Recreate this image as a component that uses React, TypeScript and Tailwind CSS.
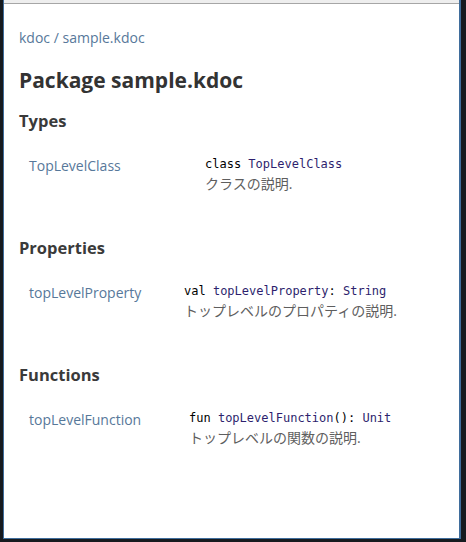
import React from "react";

const sans = { fontFamily: '"Open Sans", "Noto Sans CJK JP", sans-serif' };
const mono = { fontFamily: '"DejaVu Sans Mono", "Liberation Mono", monospace' };

function Section({
  title,
  link,
  col,
  code,
  desc,
}: {
  title: string;
  link: string;
  col: string;
  code: React.ReactNode;
  desc: string;
}) {
  return (
    <div className="pb-[41px]">
      <h2 className="text-[16.5px] leading-[24px] font-bold text-[#3a3a3a]">{title}</h2>
      <div className="mt-[21px] flex">
        <div className={`${col} pl-[10px] -mt-[1px]`}>
          <a className="text-[14px] leading-[20px] text-[#57789a]">{link}</a>
        </div>
        <div className="pt-[1px]">
          <div className="text-[12px] leading-[18px] text-black whitespace-pre" style={mono}>
            {code}
          </div>
          <p className="text-[14px] leading-[22px] text-[#5e5e5e]">{desc}</p>
        </div>
      </div>
    </div>
  );
}

export default function App() {
  const id = "text-[#2e1f6e]";
  return (
    <div className="w-[466px] h-[542px] bg-[#161a1f] pl-[3px] pr-[5px] pb-[3px]" style={sans}>
      <div className="h-full border-l border-r-2 border-b border-[#3f6d9c] bg-white flex flex-col">
        <div className="h-[3px] bg-[#eeeeee]" />
        <div className="h-px bg-[#a6a6a6]" />
        <div className="pl-[15px] pt-[24px]">
          <div className="text-[14px] leading-[20px] text-[#57789a]">
            <span>kdoc</span> / <span>sample.kdoc</span>
          </div>
          <h1 className="mt-[18px] text-[21px] leading-[28px] font-bold text-[#333333]">
            Package sample.kdoc
          </h1>
          <div className="mt-[15px]">
            <Section
              title="Types"
              link="TopLevelClass"
              col="w-[186px]"
              code={
                <>
                  class <span className={id}>TopLevelClass</span>
                </>
              }
              desc="クラスの説明."
            />
            <Section
              title="Properties"
              link="topLevelProperty"
              col="w-[165px]"
              code={
                <>
                  val <span className={id}>topLevelProperty</span>: <span className={id}>String</span>
                </>
              }
              desc="トップレベルのプロパティの説明."
            />
            <Section
              title="Functions"
              link="topLevelFunction"
              col="w-[170px]"
              code={
                <>
                  fun <span className={id}>topLevelFunction</span>(): <span className={id}>Unit</span>
                </>
              }
              desc="トップレベルの関数の説明."
            />
          </div>
        </div>
      </div>
    </div>
  );
}
